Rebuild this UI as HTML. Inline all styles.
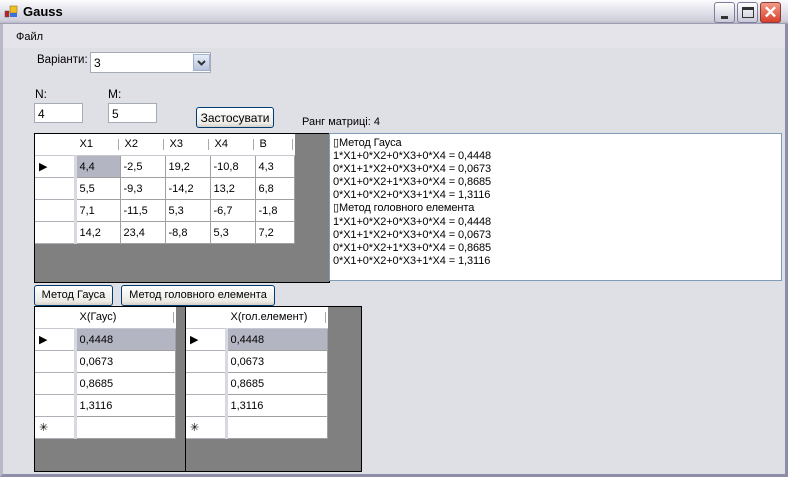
<!DOCTYPE html>
<html><head><meta charset="utf-8"><style>
*{margin:0;padding:0;box-sizing:border-box}
body{width:788px;height:477px;overflow:hidden;font-family:"Liberation Sans",sans-serif;font-size:11px;color:#000;background:#dfdfe6;position:relative}
.a{position:absolute}
.title{left:0;top:0;width:788px;height:24px;background:linear-gradient(#fbfbfd,#e6e6ee 40%,#cfcfdb 90%,#b8b8c8);border-bottom:1px solid #9e9eb4}
.win{left:0;top:24px;width:788px;height:453px;border-left:3px solid #b8b8c8;border-right:3px solid #8d8da7;border-bottom:3px solid #8d8da7}
.menu{left:3px;top:24px;width:782px;height:24px;background:#e4e4ea}
.tb{background:#fff;border:1px solid #a5acb5;padding:3px 0 0 3px;font-size:12px}
.btn{background:linear-gradient(#fff,#ecebe6 80%,#d6d0c5);border:1px solid #003c74;border-radius:3px;text-align:center;font-size:11px;padding-top:3px}
.gray{background:#808080;border:1px solid #000}
table{border-collapse:collapse;position:absolute;left:0;top:0;background:#fff}
td{border:1px solid #a0a0a0;height:22px;padding:1px 0 0 3px;font-size:11px;vertical-align:middle}
th{background:#fff;font-weight:normal;text-align:left;padding:0 0 0 4px;height:21px;border-bottom:1px solid #c8c8d0;border-right:1px solid #fff;font-size:11px;position:relative}
th.s:after{content:"";position:absolute;right:1px;top:5px;height:11px;border-right:1px solid #aaa}
td.rh{background:#fff;border:none;border-bottom:1px solid #b0b0b8;border-right:3px solid #d8d8e0;padding-left:4px}
td.sel{background:#b3b5c2}
.txt{left:329px;top:133px;width:453px;height:148px;background:#fff;border:1px solid #7f9db9;padding:3px 0 0 3px;font-size:11px;line-height:13.1px;white-space:pre;letter-spacing:-0.1px}
</style></head><body>
<div class="a win"></div>
<div class="a title"></div>
<svg class="a" style="left:4px;top:5px" width="16" height="14"><rect x="1" y="6" width="4" height="6" fill="#c02020" stroke="#555" stroke-width=".5"/><rect x="6" y="1" width="7" height="7" fill="#f0c020" stroke="#806010" stroke-width=".5"/><rect x="6" y="8" width="7" height="4" fill="#3a70d8"/></svg>
<div class="a" style="left:23px;top:4px;font-weight:bold;font-size:13px">Gauss</div>
<div class="a" style="left:714px;top:2px;width:21px;height:21px;border:1px solid #7e7e9a;border-radius:3px;background:linear-gradient(#fff,#c8c8d8)"><div class="a" style="left:6px;top:13px;width:7px;height:3px;background:#333"></div></div>
<div class="a" style="left:737px;top:2px;width:21px;height:21px;border:1px solid #7e7e9a;border-radius:3px;background:linear-gradient(#fff,#c8c8d8)"><div class="a" style="left:4px;top:4px;width:12px;height:11px;border:1px solid #333;border-top-width:3px"></div></div>
<div class="a" style="left:760px;top:2px;width:21px;height:21px;border:1px solid #8a3a3a;border-radius:3px;background:linear-gradient(#f29a86,#d8402a);color:#fff;font-size:17px;text-align:center;line-height:19px;font-weight:bold">✕</div>
<div class="a menu"></div>
<div class="a" style="left:16px;top:31px">Файл</div>
<div class="a" style="left:37px;top:54px;font-size:11.5px">Варіанти:</div>
<div class="a tb" style="left:90px;top:52px;width:121px;height:21px">3</div>
<div class="a" style="left:193px;top:54px;width:17px;height:17px;background:linear-gradient(#e6ecf8,#b8c4dc);border:1px solid #9fb0cc"><svg width="15" height="15"><path d="M4 6 L7.5 9.5 L11 6" stroke="#333" stroke-width="2" fill="none"/></svg></div>
<div class="a" style="left:35px;top:87px;font-size:12px">N:</div>
<div class="a" style="left:108px;top:87px;font-size:12px">M:</div>
<div class="a tb" style="left:34px;top:103px;width:49px;height:20px">4</div>
<div class="a tb" style="left:108px;top:103px;width:49px;height:20px">5</div>
<div class="a btn" style="left:196px;top:107px;width:78px;height:21px;font-size:12px">Застосувати</div>
<div class="a" style="left:302px;top:116px;font-size:11px">Ранг матриці: 4</div>

<div class="a gray" style="left:34px;top:133px;width:296px;height:150px">
<table style="width:260px">
<tr><th style="width:40px"></th><th class="s" style="width:45px">X1</th><th class="s" style="width:45px">X2</th><th class="s" style="width:45px">X3</th><th class="s" style="width:45px">X4</th><th class="s">B</th></tr>
<tr><td class="rh">&#9654;</td><td class="sel">4,4</td><td>-2,5</td><td>19,2</td><td>-10,8</td><td>4,3</td></tr>
<tr><td class="rh"></td><td>5,5</td><td>-9,3</td><td>-14,2</td><td>13,2</td><td>6,8</td></tr>
<tr><td class="rh"></td><td>7,1</td><td>-11,5</td><td>5,3</td><td>-6,7</td><td>-1,8</td></tr>
<tr><td class="rh"></td><td>14,2</td><td>23,4</td><td>-8,8</td><td>5,3</td><td>7,2</td></tr>
</table></div>

<div class="a txt">▯Метод Гауса
1*X1+0*X2+0*X3+0*X4 = 0,4448
0*X1+1*X2+0*X3+0*X4 = 0,0673
0*X1+0*X2+1*X3+0*X4 = 0,8685
0*X1+0*X2+0*X3+1*X4 = 1,3116
▯Метод головного елемента
1*X1+0*X2+0*X3+0*X4 = 0,4448
0*X1+1*X2+0*X3+0*X4 = 0,0673
0*X1+0*X2+1*X3+0*X4 = 0,8685
0*X1+0*X2+0*X3+1*X4 = 1,3116</div>

<div class="a btn" style="left:34px;top:285px;width:79px;height:21px">Метод Гауса</div>
<div class="a btn" style="left:121px;top:285px;width:154px;height:21px">Метод головного елемента</div>

<div class="a gray" style="left:34px;top:306px;width:152px;height:166px">
<table style="width:141px">
<tr><th style="width:40px"></th><th class="s">X(Гаус)</th></tr>
<tr><td class="rh">&#9654;</td><td class="sel">0,4448</td></tr>
<tr><td class="rh"></td><td>0,0673</td></tr>
<tr><td class="rh"></td><td>0,8685</td></tr>
<tr><td class="rh"></td><td>1,3116</td></tr>
<tr><td class="rh">&#x2733;</td><td></td></tr>
</table></div>
<div class="a gray" style="left:185px;top:306px;width:177px;height:166px">
<table style="width:142px">
<tr><th style="width:40px"></th><th class="s">X(гол.елемент)</th></tr>
<tr><td class="rh">&#9654;</td><td class="sel">0,4448</td></tr>
<tr><td class="rh"></td><td>0,0673</td></tr>
<tr><td class="rh"></td><td>0,8685</td></tr>
<tr><td class="rh"></td><td>1,3116</td></tr>
<tr><td class="rh">&#x2733;</td><td></td></tr>
</table></div>
</body></html>
